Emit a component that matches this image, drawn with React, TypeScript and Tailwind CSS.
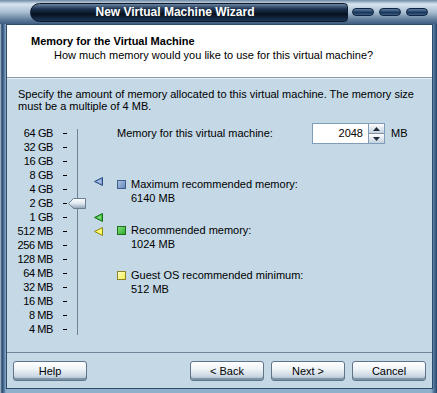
import React from "react";

const scale = [
  "64 GB",
  "32 GB",
  "16 GB",
  "8 GB",
  "4 GB",
  "2 GB",
  "1 GB",
  "512 MB",
  "256 MB",
  "128 MB",
  "64 MB",
  "32 MB",
  "16 MB",
  "8 MB",
  "4 MB",
];

function Marker({ fill, stroke, top }: { fill: string; stroke: string; top: string }) {
  return (
    <svg width="9" height="9" viewBox="0 0 9 9" className={`absolute left-0 ${top}`}>
      <polygon points="0.5,4.5 8.5,0.5 8.5,8.5" fill={fill} stroke={stroke} strokeWidth="1" />
      <polygon points="3,4.5 7,2.5 7,6.5" fill="#ffffff" opacity="0.35" />
    </svg>
  );
}

function Legend({
  swatch,
  label,
  value,
  className,
}: {
  swatch: string;
  label: string;
  value: string;
  className: string;
}) {
  return (
    <div className={`flex ${className}`}>
      <div className="w-[14px] pt-[3px]">
        <div className={`h-[9px] w-[9px] border ${swatch}`} />
      </div>
      <div className="flex flex-col leading-[14px]">
        <span>{label}</span>
        <span>{value}</span>
      </div>
    </div>
  );
}

function WizardButton({ label }: { label: string }) {
  return (
    <button className="flex h-[20px] w-[74px] items-center justify-center rounded-[3px] border border-[#5f7488] bg-[linear-gradient(to_bottom,#ffffff_0%,#eef3f7_40%,#cdd9e4_75%,#a9bccd_100%)] text-[11px] text-black shadow-[inset_0_-2px_0_#7d93a8]">
      {label}
    </button>
  );
}

export default function App() {
  return (
    <div className="flex h-[393px] w-[437px] flex-col overflow-hidden bg-[linear-gradient(to_right,#b9cadb_0px,#26476d_2px,#4f7399_4px,#8fb0cc_6px,#8fb0cc_431px,#4f7399_434px,#26476d_437px)] font-['Tahoma','Liberation_Sans',sans-serif] text-[11px] text-black">
      {/* Title bar */}
      <div className="flex h-[24px] items-center bg-[linear-gradient(to_bottom,#6f8aa6_0px,#d7e3ee_4px,#aabfd2_12px,#5d7a98_20px,#3e5d80_24px)]">
        <div className="w-[30px]" />
        <div className="flex h-[19px] w-[318px] items-center justify-center rounded-l-[10px] rounded-r-[4px] border border-[#0c1a2c] bg-[linear-gradient(to_bottom,#6b84a0_0%,#1b3150_30%,#07111f_60%,#1c3656_100%)] pr-[28px] text-[12px] font-bold text-white">
          New Virtual Machine Wizard
        </div>
        <div className="ml-[4px] flex gap-[5px]">
          <div className="h-[8px] w-[22px] rounded-full border border-[#0f2440] bg-[linear-gradient(to_bottom,#5d7fa6,#1a3558_60%,#3b5f88)]" />
          <div className="h-[8px] w-[22px] rounded-full border border-[#0f2440] bg-[linear-gradient(to_bottom,#5d7fa6,#1a3558_60%,#3b5f88)]" />
          <div className="h-[8px] w-[22px] rounded-full border border-[#0f2440] bg-[linear-gradient(to_bottom,#5d7fa6,#1a3558_60%,#3b5f88)]" />
        </div>
      </div>

      {/* Window content */}
      <div className="ml-[6px] mr-[4px] flex h-[365px] flex-col border border-[#2f4c6c] bg-[#c4d8e6]">
        {/* Header */}
        <div className="flex h-[52px] flex-col bg-white pl-[24px] pt-[9px]">
          <div className="leading-[14px] font-bold">Memory for the Virtual Machine</div>
          <div className="pl-[23px] leading-[14px]">
            How much memory would you like to use for this virtual machine?
          </div>
        </div>
        <div className="h-[1px] bg-[#8599ab]" />
        <div className="h-[1px] bg-[#e6eff6]" />

        {/* Body */}
        <div className="flex flex-1 flex-col pl-[11px] pr-[10px] pt-[9px]">
          <p className="leading-[12px]">
            Specify the amount of memory allocated to this virtual machine. The memory size
            must be a multiple of 4 MB.
          </p>

          <div className="mt-[14px] flex">
            {/* Scale */}
            <div className="-ml-[11px] flex flex-col">
              {scale.map((s) => (
                <div key={s} className="flex h-[14px] items-center">
                  <span className="w-[46px] text-right leading-[14px] tracking-[-0.4px]">{s}</span>
                  <span className="ml-[10px] h-[1px] w-[4px] bg-black" />
                </div>
              ))}
            </div>

            {/* Track */}
            <div className="relative ml-[1px] w-[18px]">
              <div className="ml-[9px] mt-[3px] h-[206px] w-[1px] bg-[#6f8294]" />
              <svg width="18" height="11" viewBox="0 0 18 11" className="absolute left-0 top-[72px]">
                <defs>
                  <linearGradient id="thumb" x1="0" y1="0" x2="0" y2="1">
                    <stop offset="0" stopColor="#ffffff" />
                    <stop offset="0.5" stopColor="#dfe7ee" />
                    <stop offset="1" stopColor="#8ea2b4" />
                  </linearGradient>
                </defs>
                <polygon points="0.5,5.5 5.5,0.5 17.5,0.5 17.5,10.5 5.5,10.5" fill="url(#thumb)" stroke="#6a7f93" />
              </svg>
            </div>

            {/* Markers */}
            <div className="relative ml-[8px] w-[9px]">
              <Marker fill="#7d9ad0" stroke="#2d4f86" top="top-[51px]" />
              <Marker fill="#3fc03a" stroke="#17701a" top="top-[87px]" />
              <Marker fill="#fbf44a" stroke="#8c8720" top="top-[101px]" />
            </div>

            {/* Right panel */}
            <div className="-mt-[3px] ml-[14px] flex flex-1 flex-col">
              <div className="flex h-[21px] items-center">
                <span className="w-[195px]">Memory for this virtual machine:</span>
                <div className="flex h-[21px] w-[57px] items-center justify-end border border-[#7f9db9] bg-white pr-[5px]">
                  2048
                </div>
                <div className="flex h-[21px] w-[16px] flex-col border border-[#7f9db9] border-l-0">
                  <div className="flex flex-1 items-center justify-center border-b border-[#7f8fa0] bg-[linear-gradient(to_bottom,#ffffff,#c3d2df)]">
                    <svg width="7" height="4" viewBox="0 0 7 4">
                      <polygon points="0,4 3.5,0 7,4" fill="#1f2d3b" />
                    </svg>
                  </div>
                  <div className="flex flex-1 items-center justify-center bg-[linear-gradient(to_bottom,#ffffff,#c3d2df)]">
                    <svg width="7" height="4" viewBox="0 0 7 4">
                      <polygon points="0,0 3.5,4 7,0" fill="#1f2d3b" />
                    </svg>
                  </div>
                </div>
                <span className="ml-[6px]">MB</span>
              </div>

              <Legend
                className="mt-[33px]"
                swatch="border-[#3d5f8e] bg-[linear-gradient(135deg,#a9c0e0,#6b8cc0)]"
                label="Maximum recommended memory:"
                value="6140 MB"
              />
              <Legend
                className="mt-[18px]"
                swatch="border-[#1f6e1f] bg-[linear-gradient(135deg,#7fe07a,#2faa2c)]"
                label="Recommended memory:"
                value="1024 MB"
              />
              <Legend
                className="mt-[17px]"
                swatch="border-[#8c8628] bg-[linear-gradient(135deg,#ffffc0,#f4ee50)]"
                label="Guest OS recommended minimum:"
                value="512 MB"
              />
            </div>
          </div>
        </div>

        {/* Footer */}
        <div className="h-[1px] bg-[#6e8499]" />
        <div className="flex h-[35px] items-start pl-[6px] pr-[6px] pt-[8px]">
          <WizardButton label="Help" />
          <div className="flex-1" />
          <div className="flex gap-[7px]">
            <WizardButton label="< Back" />
            <WizardButton label="Next >" />
            <WizardButton label="Cancel" />
          </div>
        </div>
      </div>
    </div>
  );
}
